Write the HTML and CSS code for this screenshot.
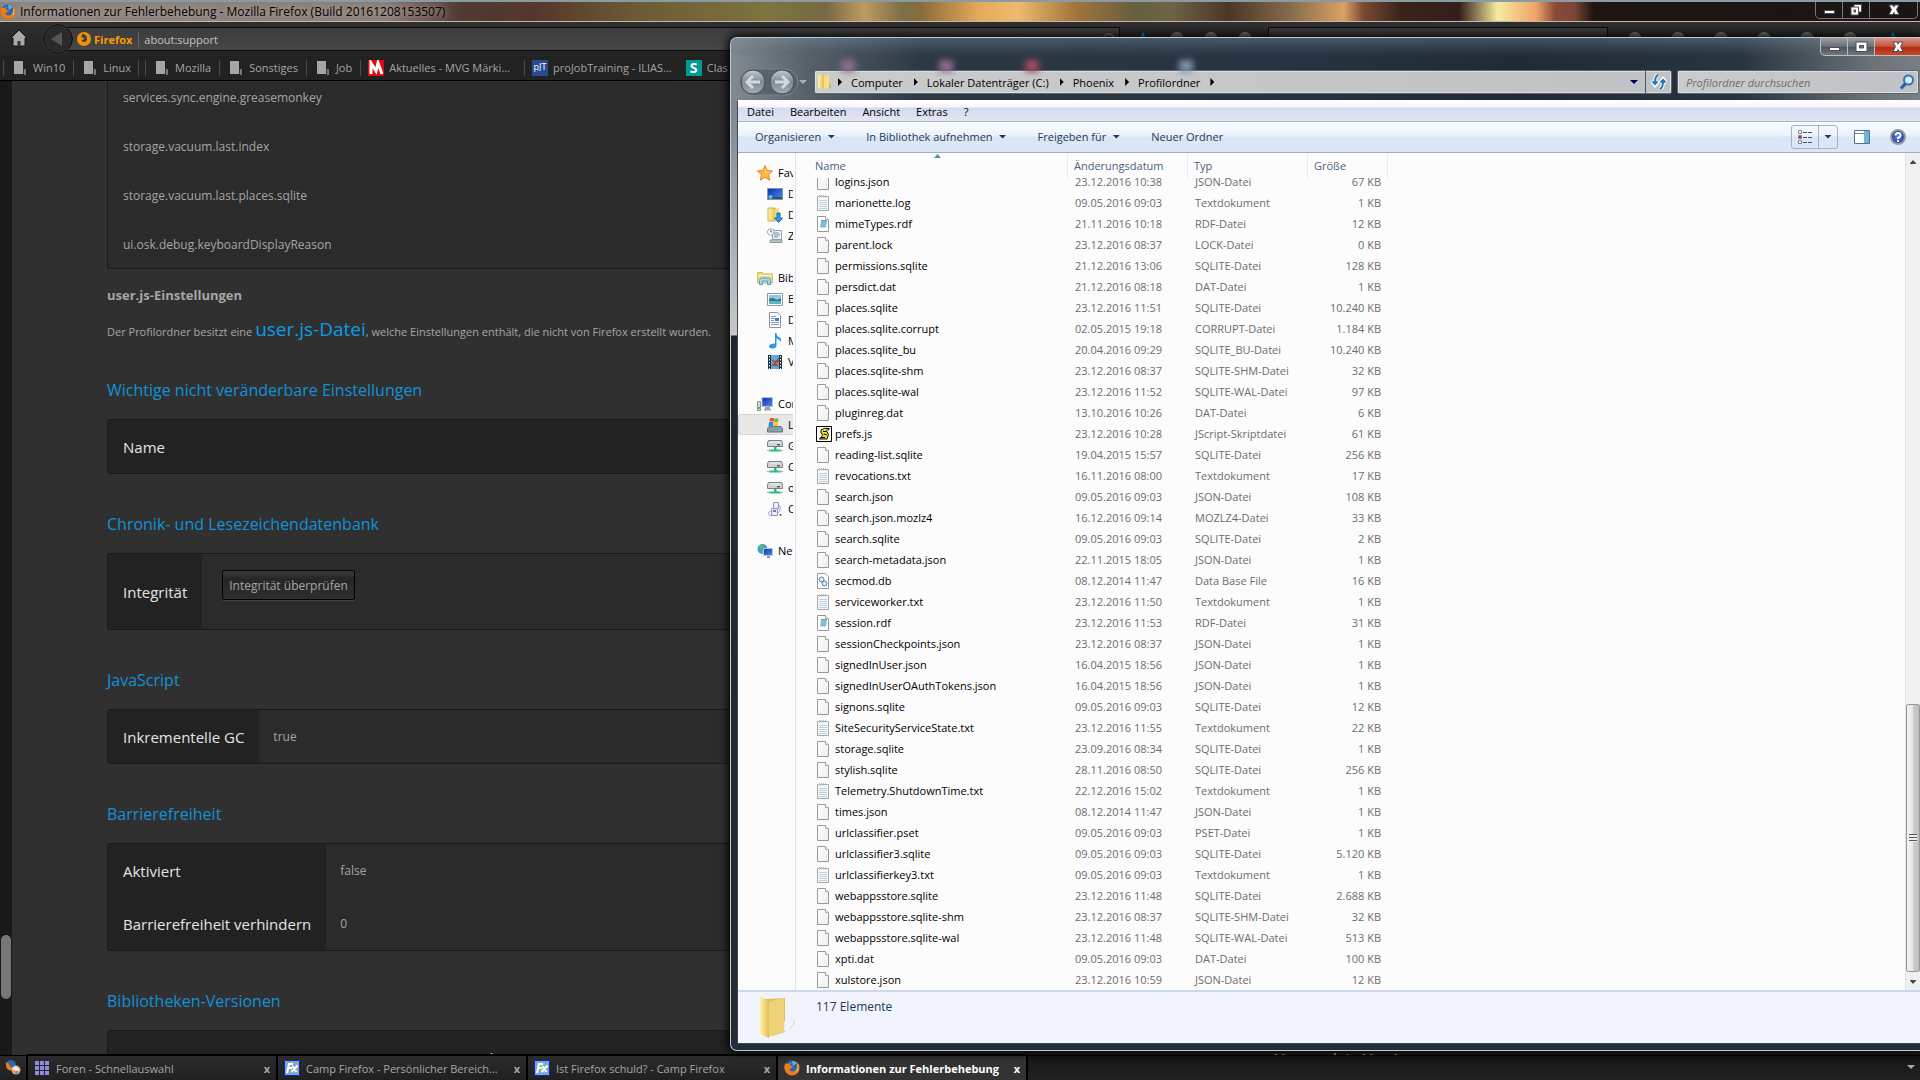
FILE: index.html
```html
<!DOCTYPE html>
<html lang="de">
<head>
  <meta charset="UTF-8">
  <title>Informationen zur Fehlerbehebung</title>
  <link rel="stylesheet" href="styles.css">
</head>
<body>
  <!-- shared icons -->
  <svg class="sprite" width="0" height="0">
    <defs>
      <linearGradient id="gold" x1="0" x2="1"><stop offset="0" stop-color="#fff3a8"/><stop offset="1" stop-color="#e3bd55"/></linearGradient>
      <linearGradient id="screen" x1="0" x2="1" y2="1"><stop offset="0" stop-color="#0a2fb5"/><stop offset="1" stop-color="#4f8ce8"/></linearGradient>
      <linearGradient id="paper" x1="0" x2="1" y2="1"><stop offset="0" stop-color="#fff"/><stop offset="1" stop-color="#eee"/></linearGradient>
      <radialGradient id="help"><stop offset="0" stop-color="#5b8be8"/><stop offset="1" stop-color="#1c3fa5"/></radialGradient>
      <linearGradient id="orb" x2="0" y2="1"><stop offset="0" stop-color="#c3cace"/><stop offset=".5" stop-color="#818b92"/><stop offset="1" stop-color="#a4adb3"/></linearGradient>
    </defs>
    <symbol id="i-file" viewBox="0 0 16 16"><path d="M1.500.5h8l3 3v12h-11z" fill="url(#paper)" stroke="#999"/><path d="M9.500.5v3h3" fill="#fff" stroke="#aaa"/></symbol>
    <symbol id="i-text" viewBox="0 0 16 16"><path d="M1.500 1.500h11v14h-11z" fill="#f4f8fb" stroke="#a4a9ad"/><path d="M3 5.500h8M3 7.500h8M3 9.500h8M3 11.500h8M3 13.500h8" stroke="#bdd2e0"/><path d="M3.500 0v2.500M5.500 0v2.500M7.500 0v2.500M9.500 0v2.500" stroke="#bbb"/></symbol>
    <symbol id="i-rdf" viewBox="0 0 16 16"><path d="M1.500.5h8l3 3v12h-11z" fill="#fff" stroke="#999"/><path d="M9.500.5v3h3" fill="#fff" stroke="#aaa"/><path d="M5 4.500h6l-1 7H4z" fill="#7fc0d0"/><path d="M5 4.500h6" stroke="#6a9dac"/></symbol>
    <symbol id="i-db" viewBox="0 0 16 16"><path d="M1.500.5h8l3 3v12h-11z" fill="#fff" stroke="#999"/><circle cx="5.500" cy="6.500" r="2.500" fill="#dcebf5" stroke="#4d82a8"/><circle cx="8.500" cy="10.500" r="2.500" fill="#dcebf5" stroke="#4d82a8"/></symbol>
    <symbol id="i-js" viewBox="0 0 16 16"><path d="M.5.5h15v15H.5z" fill="#fff" stroke="#000"/><path d="M5 4Q8 1.500 13 2.500L10.500 5l2 3.500-1.500 4.500H3.500l2-2.500L7 8.500 5 7z" fill="#f0e23a" stroke="#000"/><path d="M7 5.500h3M8 8l3 1M5 11.500h4M12 4l1.500-1" stroke="#000"/></symbol>
    <symbol id="i-star" viewBox="0 0 16 16"><path d="M8 .5l2.200 5 5.300.5-4 3.700 1.200 5.500L8 12.300l-4.700 2.900 1.200-5.500-4-3.700 5.300-.5z" fill="#fdb73b" stroke="#e8802b"/><path d="M8 3l1 4 3 .5-4 1z" fill="#ffe68b"/></symbol>
    <symbol id="i-desktop" viewBox="0 0 16 16"><path d="M.5 2.500h15v11H.5z" fill="url(#screen)" stroke="#8096ad"/><path d="M1 11h14v2H1z" fill="#344e70"/><circle cx="3.500" cy="11" r="2" fill="#59c1e2"/></symbol>
    <symbol id="i-download" viewBox="0 0 16 16"><path d="M1 1h7l1 1v12H1z" fill="url(#gold)" stroke="#d2ae55"/><path d="M8 2l4-1v12l-4 2z" fill="#f7dc7c"/><path d="M10 6h3v5h2.500L11.500 15.500 7.500 11H10z" fill="#2d9be9" stroke="#1668b0"/></symbol>
    <symbol id="i-recent" viewBox="0 0 16 16"><path d="M5.500 2.500h9v9h-9z" fill="#edf3f7" stroke="#93a2ac"/><path d="M7 5h5M7 7h6M7 9h4" stroke="#6a8fa9"/><path d="M3 12h12v2.500H3z" fill="#c4ccd1" stroke="#8b979f"/><circle cx="3.800" cy="4" r="3.300" fill="#fff" stroke="#9aa7b0"/><path d="M3.800 2v2h1.500" fill="none" stroke="#567"/></symbol>
    <symbol id="i-library" viewBox="0 0 16 16"><path d="M.5 2.500h5l1 1.500h9v9H.5z" fill="#f3dc85" stroke="#d5b75d"/><path d="M1 5.500h14" stroke="#fff6c8"/><path d="M2.500 14.500v-4q0-2.500 2-2.500h7q2 0 2 2.500v4h-3V11h-5v3.500z" fill="#a7d8f3" stroke="#4e9ecb"/></symbol>
    <symbol id="i-image" viewBox="0 0 16 16"><path d="M.5 2.500h15v12H.5z" fill="#fff" stroke="#8d9aa5"/><path d="M2 4h12v5H2z" fill="#8cc8ee"/><path d="M2 8q4-2 6 0t6-1v3H2z" fill="#387e55"/><path d="M2 10h12v3H2z" fill="#57b2d4"/></symbol>
    <symbol id="i-doc" viewBox="0 0 16 16"><path d="M2.500.5h8l3 3v12h-11z" fill="#fff" stroke="#8a949c"/><path d="M4 4.500h5M4 6.500h4M4 8.500h3M4 10.500h8M4 12.500h8" stroke="#7d9dbb"/><path d="M8 6h4v3H8z" fill="#3c7fc1"/></symbol>
    <symbol id="i-music" viewBox="0 0 16 16"><path d="M8 0h1.500q0 3 3 4.500T13 9q0-3-3.500-3.500V13q-.5 2-4 2.500Q2 15.500 2 13q.5-2.500 6-2.500z" fill="#3096dd"/></symbol>
    <symbol id="i-video" viewBox="0 0 16 16"><path d="M1 1h14v14H1z" fill="#22303b"/><path d="M4 1h8v14H4z" fill="#5ba9de"/><path d="M4 5l4 2 4-3v4L9 9l3 3H4l3-3z" fill="#a94d37"/><path d="M2.500 2v13M13.500 2v13" stroke="#fff" stroke-dasharray="1.500 1.500"/></symbol>
    <symbol id="i-computer" viewBox="0 0 16 16"><path d="M5 1.500h10.500v9H5z" fill="url(#screen)" stroke="#b6bec6"/><path d="M8 11h5v2H8zM7 13h7v1.500H7z" fill="#9ba5ac"/><path d="M.5 5.500h3v9h-3z" fill="#d4dade" stroke="#8b959c"/><path d="M1 11h2v2H1z" fill="#3ebe4e"/></symbol>
    <symbol id="i-drive" viewBox="0 0 16 16"><path d="M3 1h4v3.500H2.500z" fill="#e9562d"/><path d="M7.500 1.500h4L11 5H7z" fill="#72bb33"/><path d="M2 5h4.500l-.5 4H1.500z" fill="#2f8ddb"/><path d="M7 5.500h4l-.5 4H6.500z" fill="#f8c52c"/><path d="M2 9.500h12l1.500 2v3.500H.5v-3.500z" fill="#899ba6" stroke="#657680"/><path d="M11 13h3" stroke="#53f067"/></symbol>
    <symbol id="i-net-drive" viewBox="0 0 16 16"><path d="M1.500 2.500h13l1 2v4H.5v-4z" fill="#cfd4d7" stroke="#777f85"/><path d="M3 4h10" stroke="#f6f6f6"/><path d="M10 6h3v1.500h-3z" fill="#4d6450"/><path d="M7 9h2.500v2.500H14v2H2v-2h5z" fill="#26bc7d"/><path d="M0 12.500h4M12 12.500h4" stroke="#a3adb4"/></symbol>
    <symbol id="i-device" viewBox="0 0 16 16"><path d="M6.500 1.500h5v6h-5zM4.500 7.500h6v7h-6z" fill="#edf0f8" stroke="#9393bd"/><path d="M6 9h3v2H6z" fill="#637fae"/><path d="M4 10q-4 1-2 4l3 1M12 4q3 4-1 8" fill="none" stroke="#aaa2ce"/><circle cx="13.500" cy="14" r="1" fill="#555"/></symbol>
    <symbol id="i-network" viewBox="0 0 16 16"><circle cx="5.500" cy="6" r="5" fill="#3c9edb"/><path d="M2 3q3-3 4 0T3 7zM5 6l3 1-2 4z" fill="#5fc052"/><path d="M6.500 5.500h9v7h-9z" fill="url(#screen)" stroke="#b6c5d4"/><path d="M10 13h3v2h-3z" fill="#8b989f"/></symbol>
    <symbol id="i-firefox" viewBox="0 0 16 16"><circle cx="8" cy="8" r="7.500" fill="#2a68b5"/><path d="M8 1q3-.5 5 2l-4 3z" fill="#5ab4e6"/><path d="M1 3.500Q-.5 8 1.500 11.500 4 15.500 8.500 15.500 15 15 15.500 8q0-4-2.500-6 1 3 0 6-1.500 4-5 3.500-3-.5-2-3l2-.5 1-1.500-3-.5q0-2 1.500-3-2-.5-3 1z" fill="#ef7b17"/><path d="M13.500 3q1.500 3 .5 7l-2 2q2-4 1.500-9z" fill="#ffcb3b"/></symbol>
    <symbol id="i-group" viewBox="0 0 16 16"><circle cx="6" cy="6" r="5" fill="#2a68b5"/><path d="M1 3q-1 7 4 8.500 5 0 6-4-4 2-6 0L4 5z" fill="#ef7b17"/><circle cx="11" cy="11" r="4.500" fill="#dfa877"/><path d="M7 10l4-3 4 4-4 1z" fill="#f5e9dc"/><path d="M9 13l3-1 1 3z" fill="#5b7fb5"/></symbol>
    <symbol id="i-fx" viewBox="0 0 16 16"><path d="M.5.5h15v15H.5z" fill="#7dadb1" stroke="#0a18e8"/><path d="M3 13l2-9h4M4 8h4M8.500 6l4 6M13.500 5.500L7.500 12" fill="none" stroke="#fff" stroke-width="2"/></symbol>
    <symbol id="i-folder" viewBox="0 0 16 16"><path d="M1 .5h6v14H1z" fill="url(#gold)"/><path d="M7 2l5-1.500v13L7 15.500z" fill="#f5df84"/><path d="M12 8h2v6h-2z" fill="#e5c763"/><path d="M13 11v3" stroke="#49b5ee"/></symbol>
    <symbol id="i-bookmark" viewBox="0 0 14 14"><path d="M0 0h9v13H0z" fill="#a5a5a5"/><path d="M9 8h3v6H9z" fill="#777"/><path d="M9.500 7v7" stroke="#333"/></symbol>
    <symbol id="i-min" viewBox="0 0 14 12"><path d="M2.500 6.500h10v3h-10z" fill="#fff" stroke="#4b4d55"/></symbol>
    <symbol id="i-max" viewBox="0 0 14 12"><path d="M2 1h11v9.500H2z" fill="#fff" stroke="#4b4d55"/><path d="M5.500 4.500h4v2.500h-4z" fill="#777" stroke="#4b4d55"/></symbol>
    <symbol id="i-restore" viewBox="0 0 14 12"><path d="M5 .5h7.500V8H5z" fill="#fff" stroke="#4b4d55"/><path d="M2 3h7.500v8H2z" fill="#fff" stroke="#4b4d55"/><path d="M4.500 5.500h2.500v3h-2.500z" fill="#555"/></symbol>
    <symbol id="i-close" viewBox="0 0 14 12"><path d="M2 1h4l1 2 1-2h4L9.500 5.500 12 10.500H8L7 8.500 6 10.500H2l2.500-5z" fill="#fff" stroke="#4b4d55"/></symbol>
    <symbol id="i-home" viewBox="0 0 18 18"><path d="M9 1l8 8h-2v8H3V9H1z" fill="#aaa" stroke="#151515"/><path d="M7.500 17v-5h3v5" fill="#333"/></symbol>
  </svg>

  <header class="titlebar">
    <svg class="icon"><use href="#i-firefox"/></svg>
    <span class="title-text">Informationen zur Fehlerbehebung - Mozilla Firefox (Build 20161208153507)</span>
    <div class="caption">
      <button aria-label="Minimieren"><svg><use href="#i-min"/></svg></button>
      <button aria-label="Verkleinern"><svg><use href="#i-restore"/></svg></button>
      <button class="wide" aria-label="Schließen"><svg><use href="#i-close"/></svg></button>
    </div>
  </header>

  <nav class="navbar">
    <button class="home" aria-label="Startseite"><svg><use href="#i-home"/></svg></button>
    <button class="back" aria-label="Zurück"></button>
    <div class="urlbar">
      <svg class="icon" viewBox="0 0 16 16"><circle cx="8" cy="8" r="7" fill="#f39200"/><path d="M6 3q5 0 5 5 0 3-3 3-2.500 0-2.500-2l2-.5 1-1.500-3-.5z" fill="#3f3f3f"/></svg>
      <b>Firefox</b>
      <input type="text" value="about:support" aria-label="Adresse">
      <span class="reload"></span>
    </div>
    <div class="addons"><i class="drop"></i><i></i><i></i><i></i></div>
    <div class="searchbar"></div>
    <div class="addons far"><i></i><i></i><i></i><i></i><i></i><i></i><i class="drop"></i></div>
  </nav>

  <nav class="bookmarks">
    <a href="#"><svg><use href="#i-bookmark"/></svg>Win10</a>
    <a href="#"><svg><use href="#i-bookmark"/></svg>Linux</a>
    <a href="#" class="double"><svg><use href="#i-bookmark"/></svg>Mozilla</a>
    <a href="#"><svg><use href="#i-bookmark"/></svg>Sonstiges</a>
    <a href="#"><svg><use href="#i-bookmark"/></svg>Job</a>
    <a href="#" class="site"><svg class="icon" viewBox="0 0 16 16"><path d="M0 0h16v16H0z" fill="#e30613"/><path d="M3 14V3l5 8 2-8 4 11" fill="none" stroke="#fff" stroke-width="3"/></svg>Aktuelles - MVG Märki...</a>
    <a href="#" class="site"><span class="fav blue">pJT</span>proJobTraining - ILIAS...</a>
    <a href="#" class="site bare"><span class="fav teal">S</span>Clas</a>
  </nav>

  <main class="page">
    <div class="page-scroll"><div class="page-thumb"></div></div>
    <div class="content">
      <ul class="prefs">
        <li>services.sync.engine.greasemonkey</li>
        <li>storage.vacuum.last.index</li>
        <li>storage.vacuum.last.places.sqlite</li>
        <li>ui.osk.debug.keyboardDisplayReason</li>
      </ul>
      <h3>user.js-Einstellungen</h3>
      <p>Der Profilordner besitzt eine <a href="#">user.js-Datei</a>, welche Einstellungen enthält, die nicht von Firefox erstellt wurden.</p>

      <h2>Wichtige nicht veränderbare Einstellungen</h2>
      <table class="box locked">
        <tr><th>Name</th></tr>
      </table>

      <h2>Chronik- und Lesezeichendatenbank</h2>
      <table class="box tall">
        <tr><th>Integrität</th><td><button class="check">Integrität überprüfen</button></td></tr>
      </table>

      <h2>JavaScript</h2>
      <table class="box">
        <tr><th>Inkrementelle GC</th><td>true</td></tr>
      </table>

      <h2>Barrierefreiheit</h2>
      <table class="box">
        <tr><th>Aktiviert</th><td>false</td></tr>
        <tr><th>Barrierefreiheit verhindern</th><td>0</td></tr>
      </table>

      <h2>Bibliotheken-Versionen</h2>
      <table class="box versions">
        <tr><th></th><th>Minimal vorausgesetzte Version</th><th>Verwendete Version</th></tr>
      </table>
    </div>
  </main>

  <footer class="tabs">
    <button class="group" aria-label="Tabgruppen"><svg class="icon"><use href="#i-group"/></svg></button>
    <div class="tab"><svg class="icon" viewBox="0 0 16 16"><path d="M1 3h14M1 8h14M1 13h14" stroke="#8d8ddc" stroke-width="4" stroke-dasharray="4 1"/></svg><span>Foren - Schnellauswahl</span><button aria-label="Tab schließen">x</button></div>
    <div class="tab"><svg class="icon"><use href="#i-fx"/></svg><span>Camp Firefox - Persönlicher Bereich...</span><button aria-label="Tab schließen">x</button></div>
    <div class="tab"><svg class="icon"><use href="#i-fx"/></svg><span>Ist Firefox schuld? - Camp Firefox</span><button aria-label="Tab schließen">x</button></div>
    <div class="tab active"><svg class="icon"><use href="#i-firefox"/></svg><span>Informationen zur Fehlerbehebung</span><button aria-label="Tab schließen">x</button></div>
    <span class="arrow all-tabs"></span>
  </footer>

  <section class="explorer">
    <div class="glass">
      <div class="ghosts"><i></i><i></i><i></i><i></i></div>
      <div class="caption">
        <button aria-label="Minimieren"><svg><use href="#i-min"/></svg></button>
        <button aria-label="Maximieren"><svg><use href="#i-max"/></svg></button>
        <button class="wide red" aria-label="Schließen"><svg><use href="#i-close"/></svg></button>
      </div>
      <div class="address-row">
        <svg class="orbs" viewBox="0 0 60 28"><path d="M14 1h32a13 13 0 0 1 0 26H14A13 13 0 0 1 14 1z" fill="#59636c" stroke="#79838b"/><circle cx="14" cy="14" r="12" fill="url(#orb)" stroke="#414b54"/><circle cx="43" cy="14" r="12" fill="url(#orb)" stroke="#414b54"/><path d="M21 14H8m6-6l-6 6 6 6M36 14h13m-6-6l6 6-6 6" fill="none" stroke="#d4d9dc" stroke-width="3"/></svg>
        <span class="arrow pale"></span>
        <div class="address">
          <svg class="icon"><use href="#i-folder"/></svg>
          <a href="#">Computer</a>
          <a href="#">Lokaler Datenträger (C:)</a>
          <a href="#">Phoenix</a>
          <a href="#">Profilordner</a>
          <span class="tip"></span>
          <span class="arrow navy"></span>
          <button class="refresh" aria-label="Aktualisieren"><svg class="icon" viewBox="0 0 16 16"><path d="M7 1Q4 2 4 9M1 7l3 4 3-4M9 15q3-1 3-8M9 9l3-4 3 4" fill="none" stroke="#fff" stroke-width="4"/><path d="M7 1Q4 2 4 9M1.500 7.500L4 10l2.500-2.500M9 15q3-1 3-8M9.500 8.500L12 6l2.500 2.500" fill="none" stroke="#2a74bd" stroke-width="2"/></svg></button>
        </div>
        <div class="search">
          <input type="text" placeholder="Profilordner durchsuchen" aria-label="Suchen">
          <svg class="icon" viewBox="0 0 16 16"><circle cx="9.500" cy="6" r="4.500" fill="#dcebf7" stroke="#2d76bd" stroke-width="2"/><path d="M6.500 9.500L2 14.500" stroke="#245eb0" stroke-width="3"/></svg>
        </div>
      </div>
    </div>

    <div class="client">
      <nav class="menu">
        <a href="#">Datei</a><a href="#">Bearbeiten</a><a href="#">Ansicht</a><a href="#">Extras</a><a href="#">?</a>
      </nav>
      <div class="toolbar">
        <button>Organisieren<span class="arrow"></span></button>
        <button>In Bibliothek aufnehmen<span class="arrow"></span></button>
        <button>Freigeben für<span class="arrow"></span></button>
        <button>Neuer Ordner</button>
        <div class="view">
          <button aria-label="Ansicht ändern"><svg class="icon" viewBox="0 0 16 16"><path d="M1.500 1.500h3v3h-3zM1.500 6.500h3v3h-3zM1.500 11.500h3v3h-3z" fill="#fff" stroke="#788594"/><path d="M6 3.500h4M11 3.500h4M6 8.500h4M11 8.500h4M6 13.500h4M11 13.500h4" stroke="#48566d"/><path d="M2 7h2v2H2z" fill="#e02b20"/></svg></button>
          <button aria-label="Weitere Ansichten"><span class="arrow"></span></button>
        </div>
        <button class="plain" aria-label="Vorschaufenster"><svg class="icon" viewBox="0 0 16 16"><path d="M.5 1.500h15v13H.5z" fill="#fff" stroke="#54708d"/><path d="M1 4.500h9" stroke="#6a87a3"/><path d="M10 2h5v12h-5z" fill="#6cb5d6"/></svg></button>
        <button class="plain" aria-label="Hilfe"><svg class="icon" viewBox="0 0 16 16"><circle cx="8" cy="8" r="7" fill="url(#help)" stroke="#999" stroke-width="2"/><path d="M5.500 6.500q0-2.500 2.500-2.500t2.500 2T8 9v1M8 11v2" fill="none" stroke="#fff" stroke-width="2"/></svg></button>
      </div>
      <div class="panes">
        <aside class="tree" id="tree"></aside>
        <div class="list" id="list">
          <table>
            <colgroup><col class="c-name"><col class="c-date"><col class="c-type"><col class="c-size"><col></colgroup>
            <thead><tr><th><span class="sort"></span>Name</th><th>Änderungsdatum</th><th>Typ</th><th>Größe</th><th></th></tr></thead>
            <tbody id="files"></tbody>
          </table>
        </div>
        <div class="scrollbar"><span class="up"></span><div class="thumb"><i></i></div><span class="arrow"></span></div>
      </div>
      <div class="details">
        <svg viewBox="0 0 40 44"><path d="M26 40q9-6 12-16 1 6-12 16z" fill="#c5c8d0"/><path d="M8 4l20-1v34l-12 4z" fill="#e0bd57"/><path d="M3 1l9 6v36L3 39z" fill="url(#gold)"/><path d="M12 7l12-4 3 1v33l-15 5z" fill="#edd277"/><path d="M28 26v10" stroke="#dff3fb" stroke-width="2"/></svg>
        <span>117 Elemente</span>
      </div>
    </div>
  </section>
  <script src="script.js"></script>
</body>
</html>
```
FILE: styles.css
```css
* { box-sizing: border-box; }
body {
  margin: 0; height: 100vh; overflow: hidden; display: flex; flex-direction: column;
  background: #303030; color: #a6a6a6; font: 11px "Open Sans", "Noto Sans", sans-serif;
}
button, input { font: inherit; color: inherit; border: none; background: none; padding: 0; }
a { color: inherit; text-decoration: none; }
table { border-collapse: collapse; }
.sprite { position: absolute; }
.icon { width: 16px; height: 16px; flex: none; }
.arrow {
  flex: none; width: 8px; height: 4px; background: #1e395b;
  clip-path: polygon(0 0, 100% 0, 50% 100%);
}

/* firefox title bar */
.titlebar {
  flex: none; height: 22px; display: flex; align-items: center; gap: 4px; padding-left: 0;
  border-top: 2px solid #8b9ba3; border-bottom: 1px solid #c9b5ab; color: #000;
  background: linear-gradient(90deg, #8d847c 0, #8a7d76 20%, #4f3a32 24%, #55382c 28%, #6b5a34 33%, #7d7440 40%, #756a43 43%, #c09a5e 45%, #7a7048 47%, #8a6c3c 48%, #e6a95a 51%, #eebb6d 53%, #a3743c 56%, #66603f 59%, #6e6347 61%, #4a3626 64%, #80684a 67%, #dba064 70%, #7a4a33 71%, #38231a 73%, #31201a 76%, #f6eba0 78%, #efa468 80%, #8a4a35 81%, #7a4636 82%, #1e1512 83%, #1b1412 93%, #191513 100%);
}
.title-text { font-size: 12px; text-shadow: 0 0 6px #cbbfb8; white-space: nowrap; }
.caption { margin-left: auto; display: flex; align-self: flex-start; }
.titlebar .caption { margin-right: 2px; }
.caption button {
  width: 28px; height: 17px; border: 1px solid #777; border-top: none; margin-left: -1px;
  display: flex; align-items: center; justify-content: center;
}
.caption button:first-child { border-bottom-left-radius: 5px; }
.caption .wide { width: 49px; border-bottom-right-radius: 5px; }
.caption svg { width: 14px; height: 12px; }

/* toolbars */
.navbar {
  flex: none; height: 34px; display: flex; align-items: center;
  background: linear-gradient(#2f2f2f, #242424);
}
.home { margin-left: 9px; width: 20px; height: 20px; }
.home svg { width: 18px; height: 18px; }
.back {
  flex: none; width: 30px; height: 30px; margin-left: 14px; border-radius: 50%; z-index: 1;
  background: #2a2a2a; border: 1px solid #0b0b0b; box-shadow: 0 0 1px #666;
}
.back::after {
  content: ""; display: block; width: 11px; height: 14px; margin: auto 7px;
  background: #555; clip-path: polygon(100% 0, 0 50%, 100% 100%);
}
.urlbar {
  flex: 1; height: 24px; display: flex; align-items: center; margin-left: -6px; padding-left: 8px;
  background: linear-gradient(#3c3c3c, #464646); border: 1px solid #0a0a0a;
}
.urlbar b { color: #f90; padding: 0 6px 0 2px; border-right: 1px solid #666; }
.urlbar input { flex: 1; padding-left: 5px; color: #c4c4c4; }
.reload { width: 12px; height: 12px; margin-right: 4px; border: 2px solid #777; border-radius: 50%; }
.addons { display: flex; gap: 20px; padding: 0 16px; }
.addons.far { gap: 29px; padding: 0 20px; }
.addons i { width: 14px; height: 14px; background: #777; border-radius: 7px 7px 2px 2px; }
.addons .drop { background: #0b93d1; clip-path: polygon(50% 0, 100% 100%, 0 100%); }
.searchbar { flex: none; width: 340px; height: 24px; border: 1px solid #0a0a0a; background: #3c3c3c; }
.bookmarks {
  flex: none; height: 25px; display: flex; align-items: center; padding-left: 3px;
  background: #222; border-bottom: 1px solid #000;
}
.bookmarks a {
  display: flex; align-items: center; gap: 5px; padding: 0 8px 0 10px; border-left: 1px solid #4a4a4a;
  height: 16px; line-height: 16px; white-space: nowrap;
}
.bookmarks a > svg { width: 14px; height: 14px; flex: none; }
.bookmarks .double { margin-left: 6px; box-shadow: -6px 0 #222, -7px 0 #4a4a4a; }
.bookmarks .site { padding: 0 14px 0 7px; }
.bookmarks .site > svg { width: 16px; height: 16px; }
.bookmarks .bare { border: none; padding-left: 0; }
.fav { width: 16px; height: 16px; color: #fff; text-align: center; font-size: 9px; line-height: 14px; }
.blue { background: #2b4a94; }
.teal { background: #009a96; font-size: 14px; font-weight: bold; line-height: 16px; }

/* about:support */
.page { flex: 1; min-height: 0; display: flex; overflow: hidden; }
.page-scroll { flex: none; width: 12px; background: #191919; display: flex; flex-direction: column; justify-content: flex-end; padding: 0 1px 56px; }
.page-thumb { height: 64px; border-radius: 6px; background: #777; }
.content { flex: 1; padding-left: 95px; font-size: 12px; }
.prefs {
  margin: 0; padding: 0 0 0 15px; list-style: none; height: 188px; overflow: hidden;
  background: #2b2b2b; border: 1px solid #1a1a1a; border-top: none; border-radius: 0 0 3px 3px;
}
.prefs li { height: 49px; line-height: 33px; }
.content h3 { margin: 16px 0 0; font-size: 13px; line-height: 20px; }
.content p { margin: 6px 0 0; font-size: 11px; line-height: 36px; }
.content p a { color: #0d9ce4; font-size: 19px; }
.content h2 { margin: 37px 0 16px; font-size: 16px; line-height: 26px; font-weight: normal; color: #1292d8; }
.content p + h2 { margin-top: 27px; }
.box { width: 100%; background: #2b2b2b; border-radius: 3px; border-collapse: separate; border-spacing: 0; border: 1px solid #191919; }
.box th {
  width: 1px; height: 53px; padding: 0 15px; text-align: left; white-space: nowrap;
  background: #222; color: #e4e4e4; font-weight: normal; font-size: 15px;
}
.box td { padding: 0 14px; }
.box.tall th { height: 75px; }
.box.tall td { padding-left: 20px; vertical-align: top; }
.box.locked th { width: auto; }
.check {
  margin-top: 16px; height: 30px; padding: 0 6px; border: 1px solid #000; border-radius: 2px;
  background: linear-gradient(#3a3a3a, #262626 30%, #2e2e2e); box-shadow: 0 1px #444;
}
.box.versions { table-layout: fixed; }
.box.versions th { width: auto; }
.box.versions th:first-child { width: 314px; }
.box.versions th:nth-child(2) { width: 838px; }

/* tab strip */
.tabs {
  flex: none; height: 25px; display: flex; gap: 2px; align-items: stretch;
  background: #000; border-top: 1px solid #000;
}
.tabs > * { background: linear-gradient(#2c2c2c, #202020); }
.tabs { background: linear-gradient(#161616, #222); }
.tabs .all-tabs { margin: 9px 5px 0 auto; background: #aaa; }
.group { width: 26px; }
.tab { width: 248px; display: flex; align-items: center; gap: 6px; padding: 0 6px; white-space: nowrap; overflow: hidden; box-shadow: 0 0 0 2px #000; }
.tab span { flex: 1; }
.tab button { font-weight: bold; }
.tab.active { color: #fff; font-weight: bold; background: #333; }

/* explorer window lying on top of the browser */
.explorer {
  position: absolute; left: 730px; right: 0; top: 37px; bottom: 29px;
  display: flex; flex-direction: column; padding: 0 0 6px 6px; color: #000;
  border: 1px solid #c3c9cd; border-right: none; border-radius: 7px 0 0 7px;
  background: linear-gradient(#7d858c 60px, #8e969d 120px, #c5c9cc 297px, #1b2733 298px, #222d3a);
  box-shadow: 0 0 10px 2px #000; overflow: hidden;
}
.glass {
  margin-left: -6px; flex: none; height: 62px; display: flex; flex-direction: column; padding-left: 8px; position: relative;
  background:
    linear-gradient(rgba(120, 145, 160, .4), rgba(80, 100, 115, .15) 14px, transparent 20px),
    linear-gradient(90deg, #838b92 0, #59636c 6%, #2c3844 16%, #26323f 50%, #1f2a35 66%, #28343f 85%, #6b7278 96%, #7a7f84);
}
.ghosts { position: absolute; left: 110px; top: 22px; display: flex; gap: 84px; filter: blur(3px); }
.ghosts i { width: 14px; height: 12px; background: #8d6d90; }
.ghosts i:nth-child(3) { background: #a04a5c; margin-left: -12px; }
.ghosts i:nth-child(4) { background: #7d93a8; margin-left: 56px; }
.glass .caption button { height: 18px; border-color: #b9bdc0; background: linear-gradient(#9a9fa4, #686e74 50%, #4b5157 51%, #70777d); }
.glass .caption .red { width: 46px; border-right: none; border-radius: 0; background: linear-gradient(#d9968a, #c2503a 50%, #a82a14 51%, #c8482c); }
.address-row { display: flex; align-items: center; height: 24px; margin-top: 14px; padding-right: 1px; }
.orbs { width: 60px; height: 28px; flex: none; }
.arrow.pale { background: #a9b0b6; margin-right: 7px; }
.address, .search {
  display: flex; align-items: center; height: 24px; border: 1px solid #5c656d;
  background: linear-gradient(90deg, #cacbcc, #bfc2c5); box-shadow: inset 0 0 0 1px #dcdedf; border-radius: 2px;
}
.address { flex: 1; padding-left: 2px; margin-right: 5px; }
.address a { margin-left: 11px; display: flex; align-items: center; gap: 9px; }
.address a::before, .tip {
  content: ""; width: 4px; height: 8px; background: #000; clip-path: polygon(0 0, 100% 50%, 0 100%);
}
.tip { margin-left: 10px; }
.address .icon + a { margin-left: 5px; }
.arrow.navy { margin-left: auto; background: #00005a; }
.refresh { width: 26px; height: 22px; margin-left: 7px; border-left: 1px solid #50585f; padding-top: 2px; }
.search { width: 242px; padding: 0 3px 0 8px; }
.search input { flex: 1; min-width: 0; font-style: italic; }
.search input::placeholder { color: #6d6d6d; }
.client { flex: 1; min-height: 0; display: flex; flex-direction: column; background: #fcfcfc; border: 1px solid #3c4650; border-top-color: #fff; border-right: none; }
.menu {
  flex: none; height: 21px; display: flex; align-items: center; gap: 16px; padding-left: 9px;
  background: linear-gradient(#fff, #f4f6fb 6px, #d5dbee 7px, #e2e6f5); border-bottom: 1px solid #b0b8cd;
}
.toolbar {
  flex: none; height: 31px; display: flex; align-items: center; gap: 31px; padding: 0 14px 1px 17px; color: #1e395b;
  background: linear-gradient(#fafdff, #e8f2fb 14px, #dbe6f4 15px, #dde8f6); border-bottom: 1px solid #a0afc3;
}
.toolbar button { display: flex; align-items: center; gap: 6px; }
.view { margin-left: auto; display: flex; border: 1px solid #a3b1c0; border-radius: 3px; height: 24px; }
.view button { padding: 0 5px; }
.view button + button { border-left: 1px solid #a3b1c0; }
.toolbar .plain { margin-left: -15px; }
.toolbar .plain + .plain { margin-left: -11px; }
.panes { flex: 1; min-height: 0; display: flex; }
.tree { flex: none; width: 58px; padding-top: 9px; border-right: 1px solid #d6e5f5; overflow: hidden; }
.node { display: flex; align-items: center; gap: 5px; height: 21px; padding-left: 19px; white-space: nowrap; margin-right: 2px; overflow: hidden; }
.node.child { padding-left: 29px; }
.node.last { margin-bottom: 21px; }
.node.selected { background: #e8e8e8; border: 1px solid #d5d5d5; border-right: none; padding-left: 28px; border-radius: 3px 0 0 3px; }
.list { flex: 1; min-width: 0; overflow: auto; scrollbar-width: none; }
.list table { width: 100%; table-layout: fixed; }
.c-name { width: 272px; }
.c-date, .c-type { width: 120px; }
.c-size { width: 80px; }
.list th {
  position: sticky; top: 0; height: 25px; padding: 0 0 0 6px; text-align: left; font-weight: normal;
  color: #4c607a; background: #fcfcfc; box-shadow: inset -1px 0 #e3eef8;
}
.list th:first-child { padding-left: 19px; }
.list th:last-child { box-shadow: none; }
.sort {
  position: absolute; left: 138px; top: 1px; width: 7px; height: 4px; background: #5a8fae;
  clip-path: polygon(50% 0, 100% 100%, 0 100%);
}
.list td { height: 21px; padding: 0 7px 0 7px; color: #6d6d6d; white-space: nowrap; line-height: 16px; }
.list .name { display: flex; align-items: center; gap: 3px; padding-left: 20px; color: #000; }
.list .size { text-align: right; }
.scrollbar {
  flex: none; width: 15px; display: flex; flex-direction: column; align-items: center;
  background: #f0f0f0; border-left: 1px solid #e3e3e3;
}
.scrollbar .up { width: 7px; height: 4px; margin-top: 7px; background: #444; clip-path: polygon(50% 0, 100% 100%, 0 100%); }
.scrollbar .thumb {
  height: 32%; width: 14px; margin-top: auto; border: 1px solid #979797; border-radius: 2px;
  background: linear-gradient(90deg, #f5f5f5, #e6e6e6 50%, #cdcdd0 51%, #c0c0c4);
  display: flex; align-items: center; justify-content: center;
}
.thumb i { width: 8px; height: 8px; background: repeating-linear-gradient(#555 0 1px, #eee 1px 3px); }
.scrollbar .arrow { margin: 8px 0 6px; width: 7px; background: #444; }
.details {
  flex: none; height: 53px; display: flex; gap: 19px; padding: 3px 0 0 19px; color: #1e395b;
  background: #f1f4fc; border-top: 2px solid #ccd9ea;
}
.details svg { width: 40px; height: 44px; }
.details span { line-height: 24px; font-size: 12px; }
```
FILE: script.js
```js
const files = [
  ["logins.json", "23.12.2016 10:38", "JSON-Datei", "67"],
  ["marionette.log", "09.05.2016 09:03", "Textdokument", "1"],
  ["mimeTypes.rdf", "21.11.2016 10:18", "RDF-Datei", "12"],
  ["parent.lock", "23.12.2016 08:37", "LOCK-Datei", "0"],
  ["permissions.sqlite", "21.12.2016 13:06", "SQLITE-Datei", "128"],
  ["persdict.dat", "21.12.2016 08:18", "DAT-Datei", "1"],
  ["places.sqlite", "23.12.2016 11:51", "SQLITE-Datei", "10.240"],
  ["places.sqlite.corrupt", "02.05.2015 19:18", "CORRUPT-Datei", "1.184"],
  ["places.sqlite_bu", "20.04.2016 09:29", "SQLITE_BU-Datei", "10.240"],
  ["places.sqlite-shm", "23.12.2016 08:37", "SQLITE-SHM-Datei", "32"],
  ["places.sqlite-wal", "23.12.2016 11:52", "SQLITE-WAL-Datei", "97"],
  ["pluginreg.dat", "13.10.2016 10:26", "DAT-Datei", "6"],
  ["prefs.js", "23.12.2016 10:28", "JScript-Skriptdatei", "61"],
  ["reading-list.sqlite", "19.04.2015 15:57", "SQLITE-Datei", "256"],
  ["revocations.txt", "16.11.2016 08:00", "Textdokument", "17"],
  ["search.json", "09.05.2016 09:03", "JSON-Datei", "108"],
  ["search.json.mozlz4", "16.12.2016 09:14", "MOZLZ4-Datei", "33"],
  ["search.sqlite", "09.05.2016 09:03", "SQLITE-Datei", "2"],
  ["search-metadata.json", "22.11.2015 18:05", "JSON-Datei", "1"],
  ["secmod.db", "08.12.2014 11:47", "Data Base File", "16"],
  ["serviceworker.txt", "23.12.2016 11:50", "Textdokument", "1"],
  ["session.rdf", "23.12.2016 11:53", "RDF-Datei", "31"],
  ["sessionCheckpoints.json", "23.12.2016 08:37", "JSON-Datei", "1"],
  ["signedInUser.json", "16.04.2015 18:56", "JSON-Datei", "1"],
  ["signedInUserOAuthTokens.json", "16.04.2015 18:56", "JSON-Datei", "1"],
  ["signons.sqlite", "09.05.2016 09:03", "SQLITE-Datei", "12"],
  ["SiteSecurityServiceState.txt", "23.12.2016 11:55", "Textdokument", "22"],
  ["storage.sqlite", "23.09.2016 08:34", "SQLITE-Datei", "1"],
  ["stylish.sqlite", "28.11.2016 08:50", "SQLITE-Datei", "256"],
  ["Telemetry.ShutdownTime.txt", "22.12.2016 15:02", "Textdokument", "1"],
  ["times.json", "08.12.2014 11:47", "JSON-Datei", "1"],
  ["urlclassifier.pset", "09.05.2016 09:03", "PSET-Datei", "1"],
  ["urlclassifier3.sqlite", "09.05.2016 09:03", "SQLITE-Datei", "5.120"],
  ["urlclassifierkey3.txt", "09.05.2016 09:03", "Textdokument", "1"],
  ["webappsstore.sqlite", "23.12.2016 11:48", "SQLITE-Datei", "2.688"],
  ["webappsstore.sqlite-shm", "23.12.2016 08:37", "SQLITE-SHM-Datei", "32"],
  ["webappsstore.sqlite-wal", "23.12.2016 11:48", "SQLITE-WAL-Datei", "513"],
  ["xpti.dat", "09.05.2016 09:03", "DAT-Datei", "100"],
  ["xulstore.json", "23.12.2016 10:59", "JSON-Datei", "12"]
];
const icons = { txt: "text", log: "text", rdf: "rdf", db: "db", js: "js" };

document.getElementById("files").innerHTML = files.map(([name, date, type, size]) => {
  const icon = icons[name.split(".").pop()] || "file";
  return `<tr><td class="name"><svg class="icon"><use href="#i-${icon}"/></svg>${name}</td><td>${date}</td><td>${type}</td><td class="size">${size} KB</td><td></td></tr>`;
}).join("");

// icon, label, classes
const nodes = [
  ["star", "Favoriten", ""],
  ["desktop", "Desktop", "child"],
  ["download", "Downloads", "child"],
  ["recent", "Zuletzt besucht", "child last"],
  ["library", "Bibliotheken", ""],
  ["image", "Bilder", "child"],
  ["doc", "Dokumente", "child"],
  ["music", "Musik", "child"],
  ["video", "Videos", "child last"],
  ["computer", "Computer", ""],
  ["drive", "Lokaler Datenträger (C:)", "child selected"],
  ["net-drive", "G", "child"],
  ["net-drive", "C", "child"],
  ["net-drive", "o", "child"],
  ["device", "C", "child last"],
  ["network", "Netzwerk", ""]
];
document.getElementById("tree").innerHTML = nodes.map(([icon, label, cls]) =>
  `<div class="node ${cls}"><svg class="icon"><use href="#i-${icon}"/></svg>${label}</div>`
).join("");

const list = document.getElementById("list");
list.scrollTop = list.scrollHeight;
```
